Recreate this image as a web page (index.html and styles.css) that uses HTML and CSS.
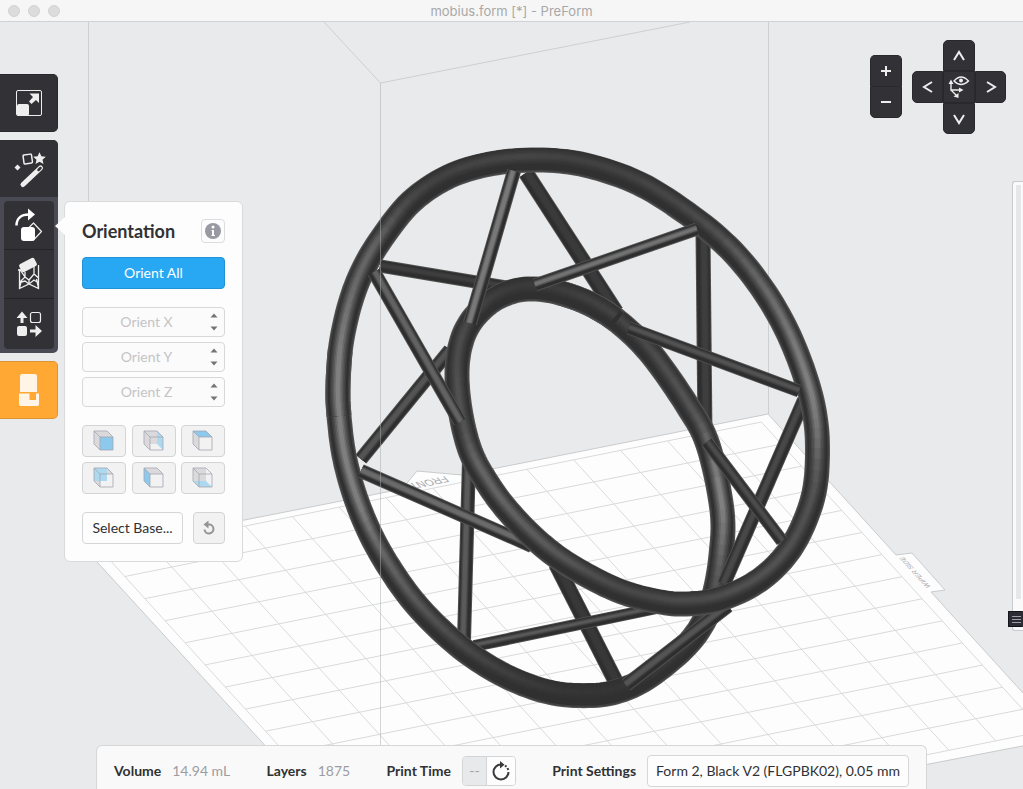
FILE: index.html
```html
<!DOCTYPE html>
<html lang="en">
<head>
<meta charset="utf-8">
<title>mobius.form [*] - PreForm</title>
<link rel="stylesheet" href="styles.css">
</head>
<body>
<header class="titlebar">
  <div class="lights"><span class="light"></span><span class="light"></span><span class="light"></span></div>
  <h1 class="title">mobius.form [*] - PreForm</h1>
</header>
<main class="workspace">
  <svg class="scene" viewBox="0 22 1023 767" preserveAspectRatio="xMidYMid slice" aria-label="Build platform with model">
    <polygon class="plate" points="768,414 896,555 912,553 945,590 931,592 1064,738 379,870 87,551 402,489 417,471 462,475"/>
    <g id="grid" class="grid"></g>
    <text class="mark" transform="matrix(-.98 .2 -.67 -.74 445 476)">FRONT</text>
    <text class="mark small" transform="matrix(-.67 -.74 .98 -.2 931 587)">WIPER SIDE</text>
    <path class="bounds" d="M88.500 22V552M768.500 22V414M324 22L380.500 83L690 22"/>
    <g id="model"></g>
    <path class="bounds front" d="M380.500 83V789"/>
  </svg>

  <nav class="toolbar" aria-label="Tools">
    <button class="tool tile" aria-label="Size">
      <svg width="28" height="28" viewBox="0 0 28 28"><rect x="1.500" y="1.500" width="25" height="25" rx="1.500" fill="none" stroke="#eee"/><rect x="2" y="15" width="12" height="12" rx="2" fill="#eee"/><path d="M14.500 4.500H24V14L21 11L16.500 15L14 12.500L18 8Z" fill="#eee"/></svg>
    </button>
    <div class="group">
      <button class="tool" aria-label="One-click print">
        <svg width="36" height="40" viewBox="0 0 36 40"><path d="M3.500 18.500l3-3 3 3-3 3z" fill="#eee"/><rect x="12.500" y="5.500" width="8.500" height="9" rx="1" fill="none" stroke="#eee" stroke-width="1.500" transform="rotate(-8 17 10)"/><path d="M28.500 3.300l1.900 4 4.400.4-3.300 3 1 4.400-4-2.300-4 2.300 1-4.400-3.300-3 4.400-.4z" fill="#eee"/><path d="M12 35.500L29.500 19" stroke="#eee" stroke-width="5" stroke-linecap="round"/><path d="M27.500 21l2-2" stroke="#333338" stroke-width="2.500" stroke-linecap="round"/></svg>
      </button>
      <div class="subgroup">
        <button class="sub" aria-label="Orientation"><svg width="32" height="40" viewBox="0 0 32 40"><path d="M3.500 20.500C3.500 13.500 8 9.500 16 9.500" fill="none" stroke="#fff" stroke-width="2.500"/><path d="M15 3.500L22 9.500L15 15.500Z" fill="#fff"/><path d="M20.500 18L28.500 26.500L20.500 35L12 26.500Z" fill="none" stroke="#eee" stroke-width="1.200" stroke-linejoin="round"/><rect x="8" y="22" width="14" height="14" rx="3" fill="#fff"/></svg></button>
        <button class="sub" aria-label="Supports"><svg width="26" height="34" viewBox="0 0 26 34"><path d="M3.500 12V31.500L13 27L22.500 31.500V8M3.500 12L9 20L3.500 25.500M9 20V15M9 20L13 23L18 17L22.500 21M13 23V27M18 17V9M3.500 25.500L9 24L13 27L18 23L22.500 26M2 13H6M3.500 31L5.500 23M22.500 31L20.500 22" fill="none" stroke="#eee" stroke-width="1.300"/><rect x="3.500" y="3.500" width="17" height="9" rx="2" fill="#eee" transform="rotate(-28 12 8)"/></svg></button>
        <button class="sub" aria-label="Layout"><svg width="28" height="28" viewBox="0 0 28 28"><path d="M7 1.500L12.500 8H8.500V13H5.500V8H1.500ZM27 21L20.500 15V19.500H15V22.500H20.500V27Z" fill="#eee"/><rect x="15.500" y="2.500" width="10" height="10" rx="2" fill="none" stroke="#eee" stroke-width="1.200"/><rect x="2" y="16" width="10" height="10" rx="2" fill="#eee"/></svg></button>
      </div>
    </div>
    <button class="tool tile print" aria-label="Print">
      <svg width="22" height="34" viewBox="0 0 22 34"><path d="M4 1H17Q19 1 19 3V19H2V3Q2 1 4 1ZM1 20.500H11.500V27H18V20.500H21V31.500Q21 33 19 33H3Q1 33 1 31.500Z" fill="#fff4e6"/></svg>
    </button>
  </nav>

  <section class="panel" aria-labelledby="panel-title">
    <div class="panel-head">
      <h2 id="panel-title">Orientation</h2>
      <button class="info" aria-label="Info"><svg width="16" height="16" viewBox="0 0 16 16"><circle cx="8" cy="8" r="8" fill="#9899a2"/><circle cx="8" cy="4" r="1.500" fill="#fff"/><path d="M6.500 7H9V12H10V13H6.500V12H7V8H6.500Z" fill="#fff"/></svg></button>
    </div>
    <button class="primary">Orient All</button>
    <div class="fields">
      <label class="field"><input type="text" aria-label="Orient X" placeholder="Orient X"><svg class="spin" width="8" height="18" viewBox="0 0 8 18"><path d="M.500 4.500L4 .500L7.500 4.500ZM.500 13.500L4 17.500L7.500 13.500Z"/></svg></label>
      <label class="field"><input type="text" aria-label="Orient Y" placeholder="Orient Y"><svg class="spin" width="8" height="18" viewBox="0 0 8 18"><path d="M.500 4.500L4 .500L7.500 4.500ZM.500 13.500L4 17.500L7.500 13.500Z"/></svg></label>
      <label class="field"><input type="text" aria-label="Orient Z" placeholder="Orient Z"><svg class="spin" width="8" height="18" viewBox="0 0 8 18"><path d="M.500 4.500L4 .500L7.500 4.500ZM.500 13.500L4 17.500L7.500 13.500Z"/></svg></label>
    </div>
    <div class="cubes">
      <button class="soft" aria-label="Front"><svg class="cube" viewBox="0 0 22 22"><path class="dim" d="M1 1H14L20 7H7V20L1 14Z"/><path class="hot" d="M7 7H20V20H7Z"/><path class="edge" d="M1 1H14L20 7V20H7L1 14ZM1 1L7 7H20M7 7V20"/></svg></button>
      <button class="soft" aria-label="Right"><svg class="cube" viewBox="0 0 22 22"><path class="dim" d="M1 1H14V14H7V20L1 14Z"/><path class="lit" d="M14 1L20 7V20L14 14Z"/><path class="edge" d="M1 1H14L20 7V20H7L1 14ZM1 1L7 7H20M7 7V20"/></svg></button>
      <button class="soft" aria-label="Top"><svg class="cube" viewBox="0 0 22 22"><path class="dim" d="M1 1L7 7V20L1 14Z"/><path class="hot" d="M1 1H14L20 7H7Z"/><path class="edge" d="M1 1H14L20 7V20H7L1 14ZM1 1L7 7H20M7 7V20"/></svg></button>
      <button class="soft" aria-label="Back"><svg class="cube" viewBox="0 0 22 22"><path class="dim" d="M14 1L20 7H14ZM1 14H7V20Z"/><path class="lit" d="M1 1H14V14H1Z"/><path class="edge" d="M1 1H14L20 7V20H7L1 14ZM1 1L7 7H20M7 7V20"/></svg></button>
      <button class="soft" aria-label="Left"><svg class="cube" viewBox="0 0 22 22"><path class="dim" d="M1 1H14L20 7H7Z"/><path class="hot" d="M1 1L7 7V20L1 14Z"/><path class="edge" d="M1 1H14L20 7V20H7L1 14ZM1 1L7 7H20M7 7V20"/></svg></button>
      <button class="soft" aria-label="Bottom"><svg class="cube" viewBox="0 0 22 22"><path class="dim" d="M1 1H14V14H1Z"/><path class="lit" d="M1 14H14L20 20H7Z"/><path class="edge" d="M1 1H14L20 7V20H7L1 14ZM1 1L7 7H20M7 7V20"/></svg></button>
    </div>
    <div class="base-row">
      <button class="outline">Select Base...</button>
      <button class="soft reset" aria-label="Reset"><svg width="16" height="16" viewBox="0 0 16 16"><path d="M6.500 4.500H8.500A4.500 4.500 0 1 1 3.500 9.500" fill="none" stroke="#949494" stroke-width="2"/><path d="M7.500 .500V8.500L2.500 4.500Z" fill="#949494"/></svg></button>
    </div>
  </section>

  <div class="view-controls">
    <div class="zoom">
      <button aria-label="Zoom in"><svg width="12" height="12" viewBox="0 0 12 12"><path d="M6 1V11M1 6H11"/></svg></button>
      <button aria-label="Zoom out"><svg width="12" height="12" viewBox="0 0 12 12"><path d="M1 6H11"/></svg></button>
    </div>
    <div class="pad">
      <button class="up" aria-label="Rotate up"><svg width="14" height="12" viewBox="0 0 14 12"><path d="M2 10L7 2L12 10"/></svg></button>
      <button class="left" aria-label="Rotate left"><svg width="12" height="14" viewBox="0 0 12 14"><path d="M10 2L2 7L10 12"/></svg></button>
      <button class="home" aria-label="Default view"><svg width="22" height="24" viewBox="0 0 22 24"><g stroke-width="1.400"><path d="M6 6Q13 -2 20.500 6Q13 13 6 6Z"/><path d="M3 8V15H12M3 15L8 20"/></g><circle cx="13" cy="5.500" r="2" fill="#eee" stroke="none"/><path d="M.500 9L3 4.500L5.500 9ZM11 12.500L15.500 15L11 17.500ZM10.500 18V23L5.500 21.500Z" fill="#eee" stroke="none"/></svg></button>
      <button class="right" aria-label="Rotate right"><svg width="12" height="14" viewBox="0 0 12 14"><path d="M2 2L10 7L2 12"/></svg></button>
      <button class="down" aria-label="Rotate down"><svg width="14" height="12" viewBox="0 0 14 12"><path d="M2 2L7 10L12 2"/></svg></button>
    </div>
  </div>

  <div class="slicer">
    <div class="track"></div>
    <button class="handle" aria-label="Layer slider"><span></span><span></span><span></span></button>
  </div>

  <footer class="status">
    <div class="stat"><b>Volume</b><span class="value">14.94 mL</span></div>
    <div class="stat"><b>Layers</b><span class="value">1875</span></div>
    <div class="stat"><b>Print Time</b>
      <div class="time"><span class="none">--</span><button class="refresh" aria-label="Estimate print time"><svg width="20" height="20" viewBox="0 0 20 20"><path d="M10 3.500A7.500 7.500 0 1 0 17.500 11" fill="none" stroke="#3a3a3c" stroke-width="2"/><path d="M9 0V7.500L13.500 3.700Z" fill="#3a3a3c"/><path d="M14 4.500L15.500 5.800M16.500 7L17.300 9" stroke="#3a3a3c" stroke-width="2"/></svg></button></div>
    </div>
    <div class="stat"><b>Print Settings</b><button class="outline settings">Form 2, Black V2 (FLGPBK02), 0.05 mm</button></div>
  </footer>
</main>
<script src="scene.js"></script>
</body>
</html>
```
FILE: styles.css
```css
* { box-sizing: border-box; }
html, body { height: 100%; }
body {
  margin: 0;
  display: flex;
  flex-direction: column;
  overflow: hidden;
  background: #e8eaeb;
  color: #303134;
  font: 14px/20px Lato, "Open Sans", sans-serif;
}
button, input { font: inherit; color: inherit; margin: 0; padding: 0; border: 0; }
button { display: flex; align-items: center; justify-content: center; cursor: pointer; }
svg { display: block; flex: none; }

.titlebar {
  position: relative;
  display: flex;
  align-items: center;
  justify-content: center;
  height: 22px;
  background: #f6f6f6;
  border-bottom: 1px solid #d0d2d3;
}
.lights { position: absolute; left: 8px; display: flex; gap: 8px; }
.light { width: 12px; height: 12px; border-radius: 50%; background: #dcdcdc; border: 1px solid #d2d2d2; }
.title { margin: 0; font: 400 13px/20px Inter, sans-serif; color: #a8a8a8; }

.workspace { position: relative; flex: 1; min-height: 0; }
.scene { position: absolute; inset: 0; width: 100%; height: 100%; }
.plate { fill: #fdfdfd; stroke: #c9cbcc; }
.grid { fill: none; stroke: #d9dadb; }
.mark { font: 11px "Liberation Sans", sans-serif; fill: #a5a6ab; }
.mark.small { font-size: 7px; }
.bounds { fill: none; stroke: #cdcfd1; }
.bounds.front { stroke: #a9abac; stroke-opacity: .5; }

.toolbar { position: absolute; left: 0; top: 52px; display: flex; flex-direction: column; gap: 8px; width: 58px; }
.tool { width: 58px; height: 57px; background: #313136; }
.tile { height: 58px; border: 1px solid #29292d; border-left: 0; border-radius: 0 5px 5px 0; }
.print { background: #ffa834; border-color: #dc9534; }
.group { border-radius: 0 5px 5px 0; overflow: hidden; background: #494a54; }
.subgroup { display: flex; flex-direction: column; margin: 4px; border-radius: 4px; overflow: hidden; }
.sub { height: 49px; background: #313136; border-bottom: 1px solid #242428; }
.sub:last-child { height: 50px; border-bottom: 0; }

.panel {
  position: absolute;
  left: 64px;
  top: 179px;
  display: flex;
  flex-direction: column;
  width: 179px;
  padding: 17px;
  background: #fdfdfd;
  border: 1px solid #d9dadc;
  border-radius: 6px;
}
.panel::before {
  content: "";
  position: absolute;
  left: -10px;
  top: 15px;
  border: solid transparent;
  border-width: 9px 10px 9px 0;
  border-right-color: #fdfdfd;
}
.panel-head { display: flex; align-items: center; justify-content: space-between; height: 24px; }
.panel h2 { margin: 0; font-size: 18px; line-height: 24px; font-weight: 700; }
.info { width: 24px; height: 24px; background: #fdfdfd; border: 1px solid #dcdcdf; border-radius: 4px; }
.primary { height: 32px; margin-top: 14px; background: #28a7f3; border: 1px solid #2093d8; border-radius: 4px; color: #fff; }
.fields { display: flex; flex-direction: column; gap: 5px; margin-top: 18px; }
.field { position: relative; display: flex; }
.field input { width: 100%; height: 30px; padding-right: 14px; padding-bottom: 2px; text-align: center; background: #fbfbfb; border: 1px solid #d8d8da; border-radius: 4px; }
.field input::placeholder { color: #c4c4c6; opacity: 1; }
.spin { position: absolute; right: 7px; top: 6px; fill: #747476; }
.cubes { display: grid; grid-template-columns: repeat(3, 44px); justify-content: space-between; gap: 5px 0; margin-top: 18px; }
.soft { height: 32px; background: #f2f2f2; border: 1px solid #d3d4d6; border-radius: 4px; }
.cube { width: 22px; height: 22px; }
.cube .dim { fill: #dadadd; }
.cube .hot { fill: #8cc9ec; }
.cube .lit { fill: #add9f0; }
.cube .edge { fill: none; stroke: #a4a5b0; stroke-opacity: .8; }
.base-row { display: flex; justify-content: space-between; margin-top: 18px; }
.outline { height: 32px; background: #fdfdfd; border: 1px solid #d5d6d8; border-radius: 4px; }
.base-row .outline { width: 101px; }
.reset { width: 32px; }

.view-controls { position: absolute; right: 17px; top: 18px; display: flex; align-items: flex-start; gap: 10px; }
.view-controls button { background: #313136; border: 1px solid #29292d; }
.view-controls path, .view-controls g { fill: none; stroke: #eee; }
.view-controls svg { stroke-width: 2; }
.view-controls path[fill] { fill: #eee; stroke: none; }
.zoom { display: grid; grid-template: 31px 32px / 32px; margin-top: 15px; }
.zoom button:first-child { border-radius: 5px 5px 0 0; border-bottom: 0; }
.zoom button:last-child { border-radius: 0 0 5px 5px; }
.pad { display: grid; grid-template: 31px 32px 31px / 31px 32px 31px; grid-template-areas: ". up ." "left home right" ". down ."; }
.up { grid-area: up; border-radius: 5px 5px 0 0; }
.left { grid-area: left; border-radius: 5px 0 0 5px; }
.home { grid-area: home; }
.right { grid-area: right; border-radius: 0 5px 5px 0; }
.down { grid-area: down; border-radius: 0 0 5px 5px; }

.slicer { position: absolute; right: 0; top: 159px; width: 11px; height: 450px; background: #fafafa; border: 1px solid #c8cacb; border-right: 0; border-radius: 3px 0 0 3px; }
.track { margin: 3px 2px 0 3px; height: 414px; background: #e6e7e9; }
.handle { position: absolute; right: 0; bottom: 3px; flex-direction: column; gap: 2px; width: 15px; height: 16px; padding-left: 1px; background: #2c2c34; border: 1px solid #141418; border-right: 0; border-radius: 1px; }
.handle span { width: 9px; height: 1px; background: #a0a0a8; }

.status {
  position: absolute;
  left: 96px;
  right: 96px;
  bottom: 0;
  display: flex;
  align-items: center;
  justify-content: space-between;
  padding: 9px 17px 2px;
  background: #f9f9f9;
  border: 1px solid #d4d6d7;
  border-bottom: 0;
  border-radius: 6px 6px 0 0;
}
.stat { display: flex; align-items: center; gap: 11px; white-space: nowrap; }
.value { color: #9c9da3; }
.time { display: flex; height: 30px; border: 1px solid #d3d4d6; border-radius: 4px; overflow: hidden; }
.none { width: 24px; line-height: 28px; text-align: center; color: #a2a3a6; background: #e8e9eb; border-right: 1px solid #d3d4d6; }
.refresh { width: 28px; background: #fdfdfd; }
.settings { padding: 0 8px; }
```
FILE: scene.js
```js
const NS = "http://www.w3.org/2000/svg";
const model = document.getElementById("model");
const grid = document.getElementById("grid");

function stroke(parent, d, color, width) {
  const p = document.createElementNS(NS, "path");
  p.setAttribute("d", d);
  if (color) {
    p.setAttribute("fill", "none");
    p.setAttribute("stroke", color);
    p.setAttribute("stroke-width", width);
  }
  parent.appendChild(p);
}

// Build platform: 14 x 14 cells
const at = (i, j) => (761.3 + 20.1 * i - 46.9 * j).toFixed(1) + " " + (422 + 22.1 * i + 9.46 * j).toFixed(1);
for (let k = 0; k <= 14; k++) {
  stroke(grid, `M${at(k, 0)}L${at(k, 14)}`);
  stroke(grid, `M${at(0, k)}L${at(14, k)}`);
}

// Catmull-Rom samples through [x, y, shine]
function sample(pts) {
  const out = [], n = 8;
  for (let i = 1; i < pts.length - 2; i++) {
    const [a, b, c, d] = [pts[i - 1], pts[i], pts[i + 1], pts[i + 2]];
    for (let s = 0; s < n; s++) {
      const t = s / n;
      out.push([0, 1, 2].map(k => {
        const [p, q, r, u] = [a[k] ?? 1, b[k] ?? 1, c[k] ?? 1, d[k] ?? 1];
        return 0.5 * (2 * q + (r - p) * t + (2 * p - 5 * q + 4 * r - u) * t * t + (3 * q - p - 3 * r + u) * t * t * t);
      }));
    }
  }
  return out;
}
const line = p => "M" + p.map(v => v[0].toFixed(1) + " " + v[1].toFixed(1)).join("L");
const grey = v => { v = Math.round(v); return `rgb(${v},${v},${v})`; };

function tube(pts) {
  const s = sample(pts), d = line(s);
  stroke(model, d, grey(84), 25);
  stroke(model, d, grey(64), 23);
  stroke(model, d, grey(48), 20);
  for (const [w, k] of [[16, .15], [13, .35], [10, .55], [7, .78], [4, 1]]) {
    for (let i = 1; i < s.length - 2; i += 2) {
      const seg = [];
      let shine = 0;
      for (let j = i - 1; j <= Math.min(i + 3, s.length - 2); j++) {
        const a = s[Math.max(j - 1, 0)], b = s[j + 1];
        const l = Math.hypot(b[0] - a[0], b[1] - a[1]);
        const tx = (b[0] - a[0]) / l, ty = (b[1] - a[1]) / l;
        const sign = tx > 0 ? 1 : -1;
        const off = 4 * Math.abs(tx) * sign;
        seg.push([s[j][0] + ty * off, s[j][1] - tx * off]);
        shine = (26 + 54 * Math.abs(ty) ** 2) * s[j][2];
      }
      stroke(model, line(seg), grey(48 + shine * k), w);
    }
  }
}
function rod(x1, y1, x2, y2, w, shine) {
  const l = Math.hypot(x2 - x1, y2 - y1);
  let nx = (y2 - y1) / l, ny = -(x2 - x1) / l;
  if (ny > 0) { nx = -nx; ny = -ny; }
  const at = o => `M${x1 + nx * o} ${y1 + ny * o}L${x2 + nx * o} ${y2 + ny * o}`;
  stroke(model, at(0), grey(80), w);
  stroke(model, at(0), grey(46), w - 2);
  stroke(model, at(1), grey(46 + shine * .35), w - 6);
  stroke(model, at(1), grey(46 + shine * .7), w - 8);
  stroke(model, at(1), grey(46 + shine), w - 10);
}

const back = [[533,289,.4],[560,293,.4],[592,305,.4],[621,324,.4],[652,355,.4],[687,405,.5],[708,445,.6],[722,510,1],[721,555,.8],[714,595,.5],[703,623,.4],[684,648,.4],[650,676,.3],[622,690,.2],[593,695.5,.2],[553,693,.2],[514,680,.3],[478,660,.4],[445,634,.5],[414,602,.6],[389,567,.7],[369,531,.8],[354,493,1],[344,455,1],[339,416,1],[338,386,1],[341,345,1],[350,304,.9]];
const front = [[344,455,1],[339,416,1],[338,386,1],[341,345,1],[350,304,.9],[363,270,.8],[382,238,.8],[411,202,.6],[448,177,.5],[490,164,.7],[537,160,.8],[585,165,.6],[640,184,.5],[692,217,.5],[732,251,.6],[764,291,.8],[787,331,.9],[804,373,1],[814,410,1],[817.5,448,.8],[814,493,.5],[799,534,.45],[779,563,.6],[752,585,.8],[717,600,1],[683,604,1],[655,601,.9],[622,592,.7],[590,577,.7],[560,559,.8],[534,538,.8],[508,511,.8],[488,484,.8],[471,453,.7],[461,415,.45],[457,377,.4],[460,347,.35],[470,323,.4],[489,303,.4],[511,292,.4],[533,289,.4],[560,293,.4],[592,305,.4],[621,324,.4],[652,355,.4]];

rod(526, 173, 616, 312, 16, 12);
rod(703, 232, 705, 436, 15, 16);
rod(380, 266, 506, 287, 13, 16);
rod(361, 459, 450, 350, 14, 38);
rod(556, 564, 619, 688, 16, 10);
rod(469, 460, 464, 640, 14, 44);
rod(474, 646, 662, 607, 12, 44);
tube(back);
rod(804, 400, 724, 584, 14, 26);
rod(626, 685, 728, 606, 14, 38);
rod(361, 471, 532, 546, 14, 60);
tube(front);
rod(514, 171, 470, 323, 14, 74);
rod(535, 285, 697, 229, 13, 68);
rod(629, 328, 799, 391, 13, 36);
rod(707, 442, 782, 541, 13, 30);
rod(374, 272, 460, 422, 14, 52);
```
